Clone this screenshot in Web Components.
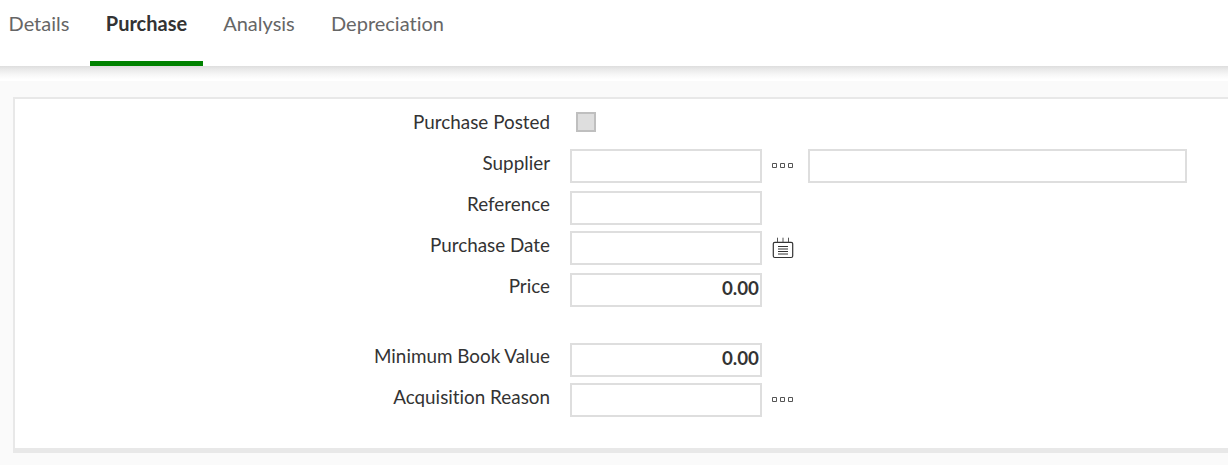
<!DOCTYPE html>
<html lang="en">
<head>
<meta charset="utf-8">
<title>Asset purchase</title>
<style>
html,body{margin:0;height:100%}
body{background:#fafafa;font-family:Lato,"Open Sans",sans-serif;font-size:20px;color:#333;overflow:hidden;font-variant-ligatures:none}
</style>
</head>
<body>
<tab-bar>
  <tab-item style="--w:84px">Details</tab-item>
  <tab-item active style="--w:113px">Purchase</tab-item>
  <tab-item style="--w:104px">Analysis</tab-item>
  <tab-item style="--w:145px">Depreciation</tab-item>
</tab-bar>
<form-panel>
  <form-row label="Purchase Posted"><check-box></check-box></form-row>
  <form-row label="Supplier"><text-box></text-box><lookup-button></lookup-button><text-box style="--w:379px"></text-box></form-row>
  <form-row label="Reference" style="--drop:7px"><text-box></text-box></form-row>
  <form-row label="Purchase Date"><text-box></text-box><date-button></date-button></form-row>
  <form-row label="Price" style="--drop:7px;--gap:29px"><text-box>0.00</text-box></form-row>
  <form-row label="Minimum Book Value" style="--drop:7px"><text-box>0.00</text-box></form-row>
  <form-row label="Acquisition Reason"><text-box></text-box><lookup-button></lookup-button></form-row>
</form-panel>
<script>
function define(name, html) {
  const template = document.createElement('template');
  template.innerHTML = html;
  customElements.define(name, class extends HTMLElement {
    constructor() {
      super();
      this.attachShadow({mode: 'open'}).append(template.content.cloneNode(true));
    }
    connectedCallback() {
      const label = this.shadowRoot.querySelector('label');
      if (label) label.textContent = this.getAttribute('label');
    }
  });
}
define('tab-bar', `<style>
:host{display:block;height:81px;background:#fff}
nav{display:flex;gap:4px;height:66px;box-sizing:border-box}
.shade{height:15px;background:linear-gradient(#dedede,#ececec 28%,#f7f7f7 58%,#fff 88%)}
</style><nav><slot></slot></nav><div class="shade"></div>`);
define('tab-item', `<style>
:host{display:flex;justify-content:center;box-sizing:border-box;width:var(--w);height:66px;padding-top:11px;line-height:24px;color:#666;white-space:nowrap}
:host(:first-child){margin-left:-3px;margin-right:5px}
:host([active]){color:#333;font-weight:700;border-bottom:5px solid #008200}
</style><slot></slot>`);
define('form-panel', `<style>
:host{display:block;box-sizing:border-box;height:356px;margin:16px 0 0 13px;padding-top:3px;background:#fff;border:2px solid #e8e8e8;border-right:0;border-bottom-width:5px}
</style><slot></slot>`);
define('form-row', `<style>
:host{display:flex;height:41px;margin-bottom:var(--gap,0px)}
label{width:535px;margin-right:20px;text-align:right;font-size:18.85px;line-height:40px;white-space:nowrap}
.controls{display:flex;height:34px;padding-top:var(--drop,6px)}
</style><label></label><div class="controls"><slot></slot></div>`);
define('text-box', `<style>
:host{display:block;box-sizing:border-box;width:var(--w,192px);height:34px;border:2px solid #dedede;background:#fff;padding-right:1px;line-height:25px;text-align:right;font-size:18.75px;font-weight:700}
</style><slot></slot>`);
define('check-box', `<style>
:host{display:block;box-sizing:border-box;width:20px;height:20px;margin:4px 6px;background:#dedede;border:2px solid #bfbfbf}
</style>`);
define('lookup-button', `<style>
:host{display:block;width:46px;height:34px}svg{display:block}
</style><svg width="46" height="34" fill="none" stroke="#555"><path d="M10.5 14.5h4v4h-4zM18.5 14.5h4v4h-4zM26.5 14.5h4v4h-4z"/></svg>`);
define('date-button', `<style>
:host{display:block;width:46px;height:34px}svg{display:block}
</style><svg width="46" height="34" fill="none" stroke="#333"><rect x="11.3" y="11.3" width="19.4" height="15.2" rx="1.5" stroke-width="1.2"/><path d="M15.5 6.7v4.5M21 6.7v4.5M26.5 6.7v4.5" stroke="#555"/><path d="M16 15.5h10M16 18h10M16 20.5h10M16 23h10"/></svg>`);
</script>
</body>
</html>
